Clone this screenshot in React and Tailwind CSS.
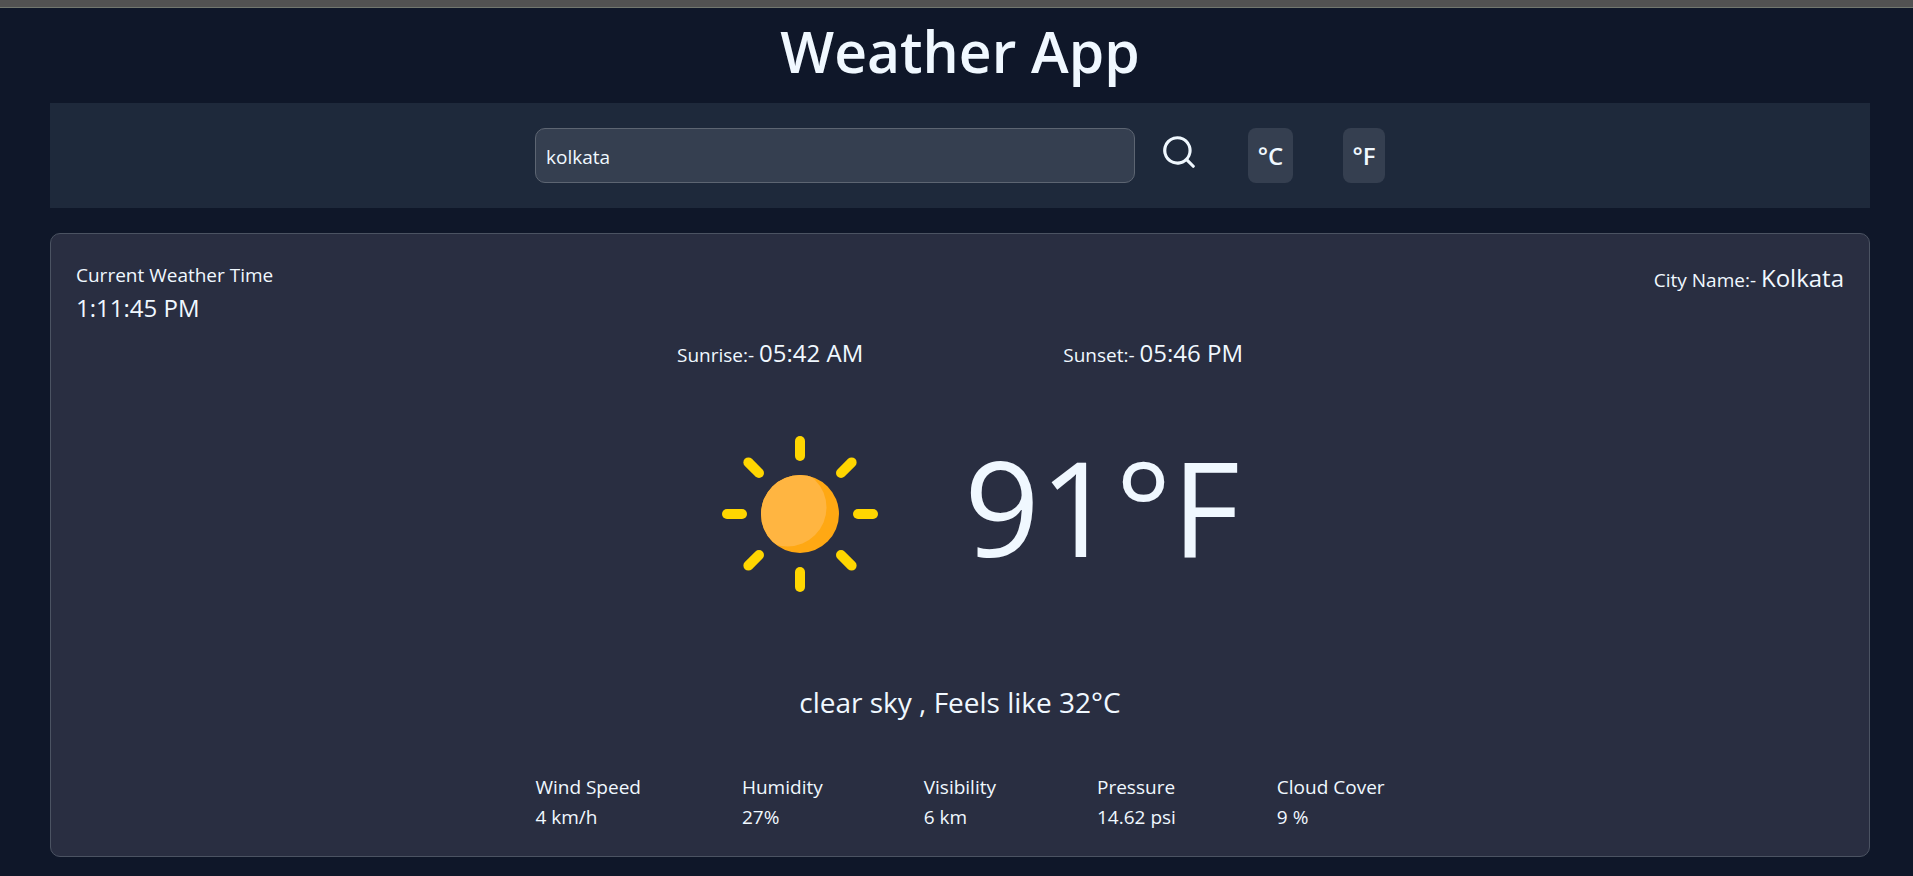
import { useState } from "react";

const stats = [
  { label: "Wind Speed", value: "4 km/h" },
  { label: "Humidity", value: "27%" },
  { label: "Visibility", value: "6 km" },
  { label: "Pressure", value: "14.62 psi" },
  { label: "Cloud Cover", value: "9 %" },
];

const rayAngles = [0, 45, 90, 135, 180, 225, 270, 315];

function SearchIcon() {
  return (
    <svg className="size-[38px]" viewBox="0 0 24 24" fill="currentColor" aria-hidden="true">
      <path d="M21.71,20.29,18,16.61A9,9,0,1,0,16.61,18l3.68,3.68a1,1,0,0,0,1.42,0A1,1,0,0,0,21.71,20.29ZM11,18a7,7,0,1,1,7-7A7,7,0,0,1,11,18Z" />
    </svg>
  );
}

function SunIcon() {
  return (
    <svg className="size-60 shrink-0" viewBox="-120 -120 240 240" role="img" aria-label="Clear sky">
      <defs>
        <clipPath id="sun-disc">
          <circle r="39" />
        </clipPath>
      </defs>
      {rayAngles.map((angle) => (
        <rect
          key={angle}
          x="-5"
          y="-78"
          width="10"
          height="25"
          rx="5"
          fill="#ffd600"
          transform={`rotate(${angle})`}
        />
      ))}
      <circle r="39" fill="#ffa813" />
      <circle cx="-12.5" cy="-6.5" r="39" fill="#ffb541" clipPath="url(#sun-disc)" />
    </svg>
  );
}

function Fact({ label, value }) {
  return (
    <p className="text-[19px] leading-[35px]">
      {label}:- <span className="text-[24px]">{value}</span>
    </p>
  );
}

function UnitButton({ children, className }) {
  return (
    <button type="button" className={`h-[55px] rounded-lg bg-[#353f50] text-center text-[24px] font-semibold ${className}`}>
      {children}
    </button>
  );
}

export default function App() {
  const [city, setCity] = useState("kolkata");

  return (
    <div className="min-h-screen bg-[#0f1729] font-['Open_Sans',sans-serif] text-[#f0f8ff]">
      <div className="h-2 border-b border-[#72776f] bg-[#525252]" />
      <main className="pr-[43px] pb-[19px] pl-[50px]">
        <h1 className="pt-[6px] pb-[14px] text-center text-[57px] leading-[75px] font-semibold">Weather App</h1>

        <form
          className="flex justify-center bg-[#1e293b] py-[25px]"
          onSubmit={(event) => event.preventDefault()}
        >
          <input
            type="text"
            aria-label="City"
            value={city}
            onChange={(event) => setCity(event.target.value)}
            className="h-[55px] w-[600px] rounded-[10px] border border-[#5d6572] bg-[#353f50] px-[10px] pt-[2px] text-[19px] outline-none"
          />
          <button type="submit" aria-label="Search" className="ml-[25px] self-start pt-[5px]">
            <SearchIcon />
          </button>
          <UnitButton className="ml-[50px] w-[45px]">°C</UnitButton>
          <UnitButton className="ml-[50px] w-[42px]">°F</UnitButton>
        </form>

        <section className="mt-[25px] rounded-[10px] border border-[#4b5362] bg-[#292e41] px-[25px] pt-[26px] pb-6">
          <div className="flex items-start justify-between">
            <div>
              <p className="text-[19px] leading-[30px]">Current Weather Time</p>
              <p className="text-[24px] leading-[35px]">1:11:45 PM</p>
            </div>
            <Fact label="City Name" value="Kolkata" />
          </div>

          <div className="mt-[10px] flex justify-center gap-[200px]">
            <Fact label="Sunrise" value="05:42 AM" />
            <Fact label="Sunset" value="05:46 PM" />
          </div>

          <div className="mt-[21px] flex items-center justify-center gap-[44px]">
            <SunIcon />
            <p className="pb-4 text-[132px] leading-[160px]">91°F</p>
          </div>

          <p className="mt-[46px] text-center text-[28px] leading-[45px]">clear sky , Feels like 32°C</p>

          <dl className="mt-[47px] flex justify-center gap-[101px] text-[19px] leading-[30px]">
            {stats.map((stat) => (
              <div key={stat.label}>
                <dt>{stat.label}</dt>
                <dd>{stat.value}</dd>
              </div>
            ))}
          </dl>
        </section>
      </main>
    </div>
  );
}
